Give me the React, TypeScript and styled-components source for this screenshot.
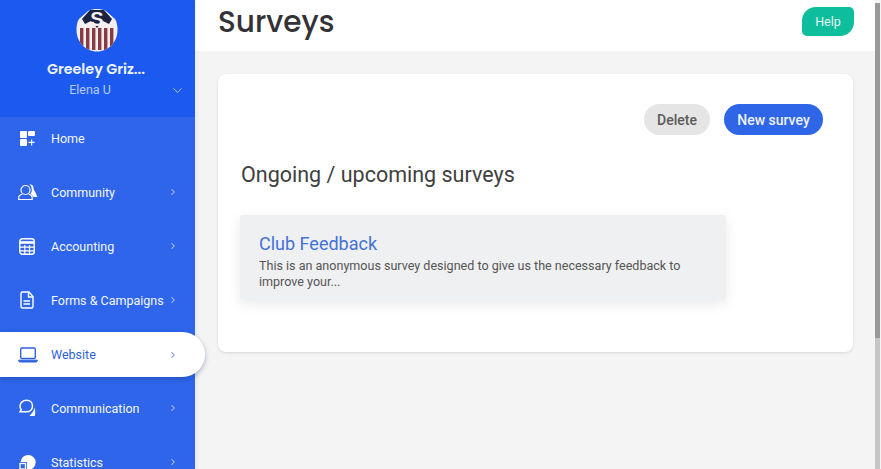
import React from "react";
import styled, { createGlobalStyle } from "styled-components";
import { ChevronDown, ChevronRight } from "lucide-react";

const GlobalStyle = createGlobalStyle`
  html, body {
    margin: 0;
    height: 100%;
    overflow: hidden;
  }
  body {
    font-family: Roboto, "Liberation Sans", sans-serif;
    background: #f4f4f4;
  }
`;

const HomeIcon = () => (
  <svg width="17" height="17" viewBox="-1 0 17 17" fill="#fff">
    <rect x="1" y="1" width="7" height="7" rx="1" />
    <rect x="9" y="1" width="7" height="5" rx="1" />
    <rect x="1" y="9" width="7" height="7" rx="1" />
    <path d="M12 9.500h1.200v2.300h2.300V13h-2.300v2.500H12V13H9.500v-1.200H12z" />
  </svg>
);

const CommunityIcon = () => (
  <svg width="20" height="17" viewBox="0 0 20 17" fill="none" stroke="#fff" strokeWidth="1.200">
    <circle cx="7.500" cy="6" r="4.500" />
    <path d="M4.500 10c-2 .6-3.800 1.600-3.800 3.500v2h13.500v-2c0-1.900-1.800-2.900-3.700-3.500" />
    <path fill="#fff" stroke="none" d="M12.500 .5c2 0 3 1.500 3 3.400 0 1.400 .5 2.600 1.400 3.400l2.600 5.700h-4.200c-.6-1.400-1.700-2.300-3-3 1-1.100 1.800-2.700 1.500-5C13.600 3 13 1.800 11.400 .8c.3-.2 .7-.3 1.100-.3z" />
  </svg>
);

const AccountingIcon = () => (
  <svg width="18" height="17" viewBox="-1 0 18 17" fill="none" stroke="#fff" strokeWidth="1.400">
    <rect x=".8" y=".8" width="14.400" height="15.400" rx="2.500" />
    <path d="M1 4.500h14" strokeWidth="2.600" />
    <path d="M5.800 7v9M10.500 7v9M1 9.200h14M1 12.800h14" strokeWidth="1.200" />
  </svg>
);

const FormsIcon = () => (
  <svg width="17" height="18" viewBox="-2 0 17 18" fill="none" stroke="#fff" strokeWidth="1.400">
    <path d="M2.500 1h6.500l4 4.500v10a1.500 1.500 0 0 1-1.500 1.500h-9A1.500 1.500 0 0 1 1 15.500v-13A1.500 1.500 0 0 1 2.500 1z" />
    <path d="M8.500 1v5h4.500" />
    <path d="M3.500 10h6.500M3.500 13h6.500" strokeWidth="1.600" />
  </svg>
);

const WebsiteIcon = () => (
  <svg width="20" height="16" viewBox="0 0 20 16" fill="none" stroke="#2f62d9" strokeWidth="1.400">
    <rect x="2.700" y="1" width="14.600" height="10.500" rx="1.200" />
    <path d="M.5 13.200h19c0 1-.8 1.800-1.800 1.800H2.300c-1 0-1.800-.8-1.800-1.800z" fill="#2f62d9" strokeWidth="1" />
  </svg>
);

const CommunicationIcon = () => (
  <svg width="19" height="18" viewBox="-1 0 19 18" fill="none" stroke="#fff" strokeWidth="1.500">
    <path d="M7.500 1.200c3.500 0 6 2.500 6 5.800s-2.500 5.800-6 5.800H1l1.200-2C1.300 9.700 1 8.500 1 7c0-3.300 3-5.800 6.500-5.800z" />
    <path fill="#fff" stroke="none" d="M15.500 8.500c1 2.800 1 5.500 .3 8.500h-5.300l2-2.600c1.600-1.400 2.700-3.400 3-5.900z" />
  </svg>
);

const StatisticsIcon = () => (
  <svg width="18" height="17" viewBox="-1 0 18 17">
    <path fill="#fff" d="M9 1a7.500 7.500 0 1 1-1 14.900V8H1.600A7.500 7.500 0 0 1 9 1z" />
    <rect x="1" y="9.500" width="5.500" height="5.500" fill="none" stroke="#fff" strokeWidth="1.300" />
  </svg>
);

const LogoLetter = styled.text`
  font-family: "Liberation Sans", sans-serif;
  font-size: 20px;
  font-weight: 700;
  fill: #f6eff0;
  text-anchor: middle;
`;

const LogoBadge = () => (
  <svg width="42" height="44" viewBox="0 0 42 44">
    <defs>
      <clipPath id="badge">
        <path d="M21 1c3 0 6 .6 9 2l9 8c2 3 2.500 7 2.500 11 0 12-9 21.500-20.500 21.500S.5 34 .5 22c0-4 .5-8 2.500-11l9-8c3-1.400 6-2 9-2z" />
      </clipPath>
    </defs>
    <g clipPath="url(#badge)">
      <rect width="42" height="44" fill="#f6eff0" />
      <path d="M6 11L14 2h14l8 9-3 5-6-3-6 7-6-7-6 3z" fill="#1c2340" />
      {[4, 10, 16, 22, 28, 34].map((x) => (
        <rect key={x} x={x} y="20" width="3.400" height="22" fill="#8a3a44" />
      ))}
      <LogoLetter x="21" y="18">S</LogoLetter>
    </g>
  </svg>
);

const Page = styled.div`
  display: flex;
  width: 881px;
  height: 469px;
  overflow: hidden;
`;

const Sidebar = styled.aside`
  flex: 0 0 195px;
  width: 195px;
  min-width: 0;
  display: flex;
  flex-direction: column;
  background: #2e65ea;
  box-shadow: 2px 0 4px rgba(0, 0, 0, 0.05);
  z-index: 2;
`;

const Profile = styled.div`
  position: relative;
  flex: 0 0 117px;
  box-sizing: border-box;
  padding: 8px 1px 0 0;
  display: flex;
  flex-direction: column;
  align-items: center;
  background: #1c5aef;
`;

const ClubName = styled.div`
  margin-top: 7px;
  padding-right: 2px;
  font-family: Poppins, Inter, sans-serif;
  font-size: 14.300px;
  font-weight: 600;
  line-height: 20px;
  color: #eef3fe;
`;

const UserName = styled.div`
  margin-top: 3px;
  padding-right: 14px;
  font-size: 12.500px;
  line-height: 16px;
  color: #b5cafa;
`;

const ProfileToggle = styled.span`
  position: absolute;
  right: 10px;
  top: 83px;
  display: flex;
  color: #b5cafa;
`;

const Menu = styled.nav`
  flex: none;
  display: flex;
  flex-direction: column;
`;

const MenuItem = styled.div<{ $active?: boolean }>`
  flex: none;
  display: flex;
  align-items: center;
  width: ${(p) => (p.$active ? "205px" : "195px")};
  height: ${(p) => (p.$active ? "45px" : "54px")};
  margin: ${(p) => (p.$active ? "5px 0 4px" : "0")};
  box-sizing: border-box;
  padding-left: 18px;
  color: ${(p) => (p.$active ? "#2f62d9" : "#f4f7ff")};
  background: ${(p) => (p.$active ? "#fff" : "transparent")};
  border-radius: ${(p) => (p.$active ? "0 23px 23px 0" : "0")};
  box-shadow: ${(p) => (p.$active ? "0 2px 5px rgba(20, 50, 120, 0.35)" : "none")};

  &:first-child {
    height: 48px;
    padding-bottom: 6px;
  }
`;

const MenuIcon = styled.span`
  flex: 0 0 33px;
  display: flex;
  align-items: center;
`;

const MenuLabel = styled.span`
  flex: 1;
  font-size: 12.500px;
  font-weight: 400;
  white-space: nowrap;
`;

const MenuArrow = styled.span<{ $active?: boolean }>`
  display: flex;
  margin-right: ${(p) => (p.$active ? "27px" : "17px")};
  opacity: 0.7;
`;

const Main = styled.main`
  flex: 1;
  display: flex;
  flex-direction: column;
  min-width: 0;
`;

const Header = styled.header`
  flex: 0 0 51px;
  display: flex;
  align-items: center;
  justify-content: space-between;
  padding: 0 21px 8px 23px;
  box-sizing: border-box;
  background: #fff;
`;

const Title = styled.h1`
  margin: 0;
  font-family: Poppins, Inter, sans-serif;
  font-size: 29.500px;
  line-height: 40px;
  font-weight: 500;
  color: #333236;
`;

const HelpButton = styled.button`
  width: 52px;
  height: 29px;
  border: 0;
  border-radius: 14px 5px 14px 5px;
  background: #0dbd9c;
  color: #e4f5f5;
  font-family: Roboto, sans-serif;
  font-size: 12.500px;
`;

const Content = styled.div`
  flex: 1;
  padding: 23px 22px 0 23px;
`;

const Card = styled.section`
  height: 278px;
  box-sizing: border-box;
  padding: 30px 30px 0 22px;
  background: #fff;
  border-radius: 8px;
  box-shadow: 0 1px 3px rgba(0, 0, 0, 0.12);
`;

const Actions = styled.div`
  display: flex;
  justify-content: flex-end;
  gap: 14px;
`;

const PillButton = styled.button<{ $primary?: boolean }>`
  height: 31px;
  width: ${(p) => (p.$primary ? "99px" : "66px")};
  padding: 0;
  border: 0;
  border-radius: 16px;
  background: ${(p) => (p.$primary ? "#2f66e8" : "#e5e5e5")};
  color: ${(p) => (p.$primary ? "#eef3fe" : "#5c5a5a")};
  font-family: Roboto, sans-serif;
  font-size: 14px;
  font-weight: 500;
`;

const SectionTitle = styled.h2`
  margin: 25px 0 0 1px;
  font-size: 21.500px;
  font-weight: 400;
  line-height: 30px;
  color: #404040;
`;

const SurveyCard = styled.article`
  width: 486px;
  height: 85px;
  margin-top: 25px;
  box-sizing: border-box;
  padding: 18px 20px 0 19px;
  background: #eff0f1;
  border-radius: 3px;
  box-shadow: 0 4px 14px rgba(0, 0, 0, 0.09);
`;

const SurveyTitle = styled.div`
  font-size: 18px;
  line-height: 22px;
  color: #4472d8;
`;

const SurveyText = styled.div`
  margin-top: 3px;
  font-size: 12.550px;
  line-height: 16px;
  color: #555;
`;

const ScrollTrack = styled.div`
  flex: 0 0 5px;
  margin: 3px 1px 0 0;
  background: #c6c6c6;
`;

const ScrollThumb = styled.div`
  height: 335px;
  background: #999;
`;

const items = [
  { label: "Home", icon: <HomeIcon /> },
  { label: "Community", icon: <CommunityIcon />, arrow: true },
  { label: "Accounting", icon: <AccountingIcon />, arrow: true },
  { label: "Forms & Campaigns", icon: <FormsIcon />, arrow: true },
  { label: "Website", icon: <WebsiteIcon />, arrow: true, active: true },
  { label: "Communication", icon: <CommunicationIcon />, arrow: true },
  { label: "Statistics", icon: <StatisticsIcon />, arrow: true },
];

export default function App() {
  return (
    <Page>
      <GlobalStyle />
      <Sidebar>
        <Profile>
          <LogoBadge />
          <ClubName>Greeley Griz...</ClubName>
          <UserName>Elena U</UserName>
          <ProfileToggle>
            <ChevronDown size={15} strokeWidth={1.500} />
          </ProfileToggle>
        </Profile>
        <Menu>
          {items.map((item) => (
            <MenuItem key={item.label} $active={item.active}>
              <MenuIcon>{item.icon}</MenuIcon>
              <MenuLabel>{item.label}</MenuLabel>
              {item.arrow && (
                <MenuArrow $active={item.active}>
                  <ChevronRight size={10} strokeWidth={2.500} />
                </MenuArrow>
              )}
            </MenuItem>
          ))}
        </Menu>
      </Sidebar>
      <Main>
        <Header>
          <Title>Surveys</Title>
          <HelpButton>Help</HelpButton>
        </Header>
        <Content>
          <Card>
            <Actions>
              <PillButton>Delete</PillButton>
              <PillButton $primary>New survey</PillButton>
            </Actions>
            <SectionTitle>Ongoing / upcoming surveys</SectionTitle>
            <SurveyCard>
              <SurveyTitle>Club Feedback</SurveyTitle>
              <SurveyText>
                This is an anonymous survey designed to give us the necessary feedback to improve your...
              </SurveyText>
            </SurveyCard>
          </Card>
        </Content>
      </Main>
      <ScrollTrack>
        <ScrollThumb />
      </ScrollTrack>
    </Page>
  );
}
